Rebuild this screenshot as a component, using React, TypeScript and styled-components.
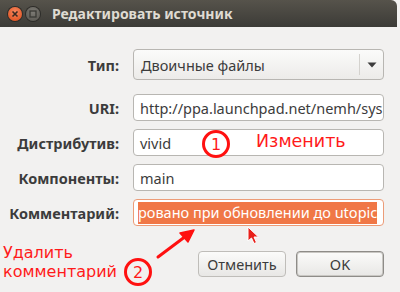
import React from 'react';
import styled, { createGlobalStyle } from 'styled-components';

const GlobalStyle = createGlobalStyle`
  html, body {
    margin: 0;
    padding: 0;
    background: #f2f1f0;
  }
  body {
    font-family: 'Noto Sans', 'Open Sans', sans-serif;
  }
`;

const Window = styled.div`
  position: relative;
  width: 400px;
  height: 292px;
  background: #f2f1f0;
  overflow: hidden;
`;

const TitleBar = styled.div`
  height: 27px;
  margin-right: 3px;
  border-radius: 0 6px 0 0;
  background: linear-gradient(#56534b, #3c3b37);
  display: flex;
  align-items: center;
  padding-left: 8px;
  gap: 4px;
`;

const WinButton = styled.div<{ $close?: boolean }>`
  width: 14px;
  height: 14px;
  border-radius: 50%;
  display: flex;
  align-items: center;
  justify-content: center;
  background: ${(p) =>
    p.$close
      ? 'radial-gradient(circle at 50% 35%, #f5875f, #df4a16)'
      : 'radial-gradient(circle at 50% 35%, #7d7b75, #55534d)'};
  box-shadow: 0 0 0 1px #2d2c29;
`;

const Title = styled.div`
  margin-left: 8px;
  color: #dfdbd2;
  font-weight: 700;
  font-size: 14px;
`;

const Body = styled.div`
  padding: 22px 16px 0 0;
`;

const Form = styled.div`
  display: grid;
  grid-template-columns: 119px 251px;
  column-gap: 14px;
  row-gap: 8px;
  align-items: center;
`;

const Label = styled.div<{ $first?: boolean }>`
  text-align: right;
  font-weight: 700;
  font-size: 14.5px;
  color: #3c3c3c;
  margin-bottom: ${(p) => (p.$first ? '6px' : '0')};
`;

const Combo = styled.div`
  height: 31px;
  box-sizing: border-box;
  border: 1px solid #b8b6b2;
  border-radius: 4px;
  background: linear-gradient(#fbfbfa, #ecebe9);
  display: flex;
  align-items: center;
  margin-bottom: 6px;
  font-size: 14.5px;
  color: #3c3c3c;
`;

const ComboText = styled.div`
  flex: 1;
  padding-left: 7px;
`;

const ComboArrow = styled.div`
  width: 23px;
  height: 21px;
  border-left: 1px solid #d4d2ce;
  display: flex;
  align-items: center;
  justify-content: center;
`;

const Entry = styled.div<{ $focus?: boolean }>`
  height: 27px;
  box-sizing: border-box;
  border: 1px solid ${(p) => (p.$focus ? '#ec9c78' : '#b8b6b2')};
  border-radius: 4px;
  background: #ffffff;
  display: flex;
  align-items: center;
  padding-left: ${(p) => (p.$focus ? '4px' : '6px')};
  font-size: 14.5px;
  color: #3c3c3c;
  white-space: nowrap;
  overflow: hidden;
`;

const Selection = styled.span`
  background: #f07746;
  color: #ffffff;
  padding: 1px 0 2px;
  line-height: 19px;
`;

const Buttons = styled.div`
  display: flex;
  justify-content: flex-end;
  gap: 10px;
  margin-top: 25px;
`;

const Button = styled.div<{ $default?: boolean }>`
  width: 88px;
  height: 26px;
  box-sizing: border-box;
  border: 1px solid ${(p) => (p.$default ? '#8e8c88' : '#bfbdb9')};
  box-shadow: ${(p) => (p.$default ? 'inset 0 0 0 1px #c9c7c3' : 'none')};
  border-radius: 4px;
  background: linear-gradient(#fbfbfa, #e8e7e5);
  display: flex;
  align-items: center;
  justify-content: center;
  font-size: 14.5px;
  color: #3c3c3c;
`;

const Note = styled.div<{ $size: number }>`
  position: absolute;
  color: #ff1a1a;
  font-family: 'DejaVu Sans', sans-serif;
  font-size: ${(p) => p.$size}px;
  line-height: 19px;
`;

const Badge = styled.div`
  position: absolute;
  width: 22px;
  height: 22px;
  border: 3px solid #ff1010;
  border-radius: 50%;
  display: flex;
  align-items: center;
  justify-content: center;
  color: #ff1a1a;
  font-family: 'DejaVu Sans', sans-serif;
  font-size: 16px;
`;

const Overlay = styled.svg`
  position: absolute;
  left: 0;
  top: 0;
  pointer-events: none;
`;

export default function App() {
  return (
    <>
      <GlobalStyle />
      <Window>
        <TitleBar>
          <WinButton $close>
            <svg width="8" height="8" viewBox="0 0 8 8">
              <path d="M1.5 1.5 L6.5 6.5 M6.5 1.5 L1.5 6.5" stroke="#3a2a22" strokeWidth="1.6" />
            </svg>
          </WinButton>
          <WinButton>
            <svg width="8" height="8" viewBox="0 0 8 8">
              <rect x="1" y="1" width="6" height="6" fill="none" stroke="#3a3935" strokeWidth="1.3" />
            </svg>
          </WinButton>
          <Title>Редактировать источник</Title>
        </TitleBar>
        <Body>
          <Form>
            <Label $first>Тип:</Label>
            <Combo>
              <ComboText>Двоичные файлы</ComboText>
              <ComboArrow>
                <svg width="10" height="6" viewBox="0 0 10 6">
                  <path d="M0.5 0.5 L9.5 0.5 L5 5.5 Z" fill="#3c3c3c" />
                </svg>
              </ComboArrow>
            </Combo>
            <Label>URI:</Label>
            <Entry>http://ppa.launchpad.net/nemh/sys</Entry>
            <Label>Дистрибутив:</Label>
            <Entry>vivid</Entry>
            <Label>Компоненты:</Label>
            <Entry>main</Entry>
            <Label>Комментарий:</Label>
            <Entry $focus>
              <Selection>ровано при обновлении до utopic</Selection>
            </Entry>
          </Form>
          <Buttons>
            <Button>Отменить</Button>
            <Button $default>OK</Button>
          </Buttons>
        </Body>

        <Badge style={{ left: 202, top: 130 }}>1</Badge>
        <Note $size={17.5} style={{ left: 256, top: 132 }}>Изменить</Note>
        <Note $size={16} style={{ left: 3, top: 243 }}>
          Удалить
          <br />
          комментарий
        </Note>
        <Badge style={{ left: 124, top: 258 }}>2</Badge>
        <Overlay width="400" height="292" viewBox="0 0 400 292">
          <path d="M158 257 L186 236" stroke="#ff1010" strokeWidth="3" strokeLinecap="round" />
          <path d="M194 230 L180 233 L188 242 Z" fill="#ff1010" stroke="#ff1010" strokeWidth="1.5" strokeLinejoin="round" />
          <path
            d="M248 227 L248 241 L251.5 238 L254 243.5 L256.5 242.5 L254 237 L258.5 237 Z"
            fill="#e8201a"
            stroke="#ffffff"
            strokeWidth="1"
            strokeLinejoin="round"
          />
        </Overlay>
      </Window>
    </>
  );
}
